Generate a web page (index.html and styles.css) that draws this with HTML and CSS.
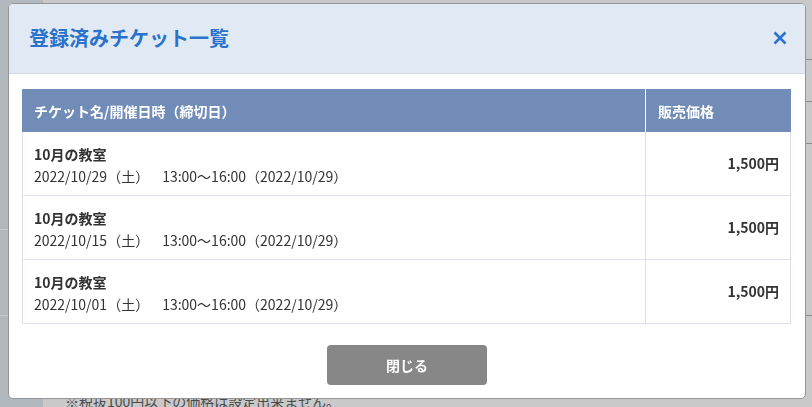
FILE: index.html
```html
<!DOCTYPE html>
<html lang="ja">
<head>
<meta charset="utf-8">
<title>登録済みチケット一覧</title>
<link rel="stylesheet" href="styles.css">
</head>
<body>
<div class="page">
  <aside class="side">
    <div class="side-row side-row--a"></div>
    <div class="side-row side-row--b"></div>
  </aside>
  <main class="main">
    <div class="main-row main-row--top"></div>
    <div class="main-row main-row--mid"></div>
    <div class="main-row main-row--mid"></div>
    <div class="main-row main-row--space"></div>
    <p class="note">※税抜100円以下の価格は設定出来ません。</p>
  </main>
</div>

<div class="modal">
  <header class="modal-header">
    <h2 class="modal-title">登録済みチケット一覧</h2>
    <button class="modal-close" aria-label="閉じる">
      <svg width="14" height="14" viewBox="0 0 14 14"><path d="M1.5 1.5 L12.5 12.5 M12.5 1.5 L1.5 12.5" stroke="currentColor" stroke-width="2.6" stroke-linecap="butt" fill="none"/></svg>
    </button>
  </header>
  <div class="modal-body">
    <table class="tickets">
      <thead>
        <tr>
          <th class="col-name">チケット名/開催日時（締切日）</th>
          <th class="col-price">販売価格</th>
        </tr>
      </thead>
      <tbody>
        <tr>
          <td class="cell-name"><div class="t-name">10月の教室</div><div class="t-date">2022/10/29（土）<span class="t-time">13:00〜16:00（2022/10/29）</span></div></td>
          <td class="cell-price">1,500円</td>
        </tr>
        <tr>
          <td class="cell-name"><div class="t-name">10月の教室</div><div class="t-date">2022/10/15（土）<span class="t-time">13:00〜16:00（2022/10/29）</span></div></td>
          <td class="cell-price">1,500円</td>
        </tr>
        <tr>
          <td class="cell-name"><div class="t-name">10月の教室</div><div class="t-date">2022/10/01（土）<span class="t-time">13:00〜16:00（2022/10/29）</span></div></td>
          <td class="cell-price">1,500円</td>
        </tr>
      </tbody>
    </table>
  </div>
  <footer class="modal-footer">
    <button class="btn-close">閉じる</button>
  </footer>
</div>
</body>
</html>
```

FILE: styles.css
```css
* { box-sizing: border-box; }
html, body {
  margin: 0;
  padding: 0;
  width: 812px;
  height: 407px;
  overflow: hidden;
  font-family: "Noto Sans CJK JP", "Noto Sans", sans-serif;
  color: #333;
}

.page {
  display: flex;
  width: 812px;
  height: 407px;
}
.side {
  width: 43px;
  flex: none;
  background: #b1b8be;
}
.side-row { border-bottom: 1px solid #c5cacf; }
.side-row--a { height: 230px; }
.side-row--b { height: 86px; }

.main {
  flex: 1;
  background: #c9c9c9;
}
.main-row { border-bottom: 1px solid #8d8d8d; }
.main-row--top { height: 60px; }
.main-row--mid { height: 42px; }
.main-row--space { height: 172px; }
.note {
  margin: 75px 0 0 22px;
  font-size: 14px;
  line-height: 20px;
  color: #4a4a4a;
}

/* modal */
.modal {
  position: fixed;
  left: 8px;
  top: 3px;
  width: 798px;
  height: 396px;
  background: #fff;
  border: 1px solid #959595;
  border-radius: 5px;
  overflow: hidden;
  display: flex;
  flex-direction: column;
}
.modal-header {
  height: 70px;
  flex: none;
  background: #e1eaf4;
  border-bottom: 1px solid #d3dbe4;
  display: flex;
  align-items: center;
  justify-content: space-between;
  padding: 0 18px 0 20px;
}
.modal-title {
  margin: 0;
  font-size: 20px;
  line-height: 28px;
  font-weight: 700;
  color: #2a72cc;
  padding-bottom: 1px;
}
.modal-close {
  border: 0;
  background: none;
  padding: 0;
  width: 14px;
  height: 14px;
  color: #2a72cc;
  display: flex;
  margin-bottom: 1px;
}

.modal-body {
  padding: 15px 14px 0 13px;
}
.tickets {
  width: 100%;
  border-collapse: separate;
  border-spacing: 0;
  font-size: 14px;
  line-height: 22px;
}
.tickets th {
  background: #728cb8;
  color: #fff;
  font-weight: 700;
  text-align: left;
  padding: 11px 12px 10px;
}
.tickets th.col-name { border-right: 1px solid #fff; }
.tickets th.col-price { width: 145px; }
.tickets td {
  padding: 11px 12px 8px 11px;
  border-bottom: 1px solid #dde0e6;
  vertical-align: middle;
}
.tickets td.cell-name {
  border-left: 1px solid #dde0e6;
  border-right: 1px solid #dde0e6;
}
.tickets td.cell-price {
  border-right: 1px solid #dde0e6;
  text-align: right;
  font-weight: 700;
  padding-right: 11px;
  padding-top: 9px;
  padding-bottom: 10px;
}
.t-name { font-weight: 700; }
.t-time { margin-left: 13px; }

.modal-footer {
  padding-top: 21px;
  display: flex;
  justify-content: center;
}
.btn-close {
  width: 160px;
  height: 40px;
  border: 0;
  border-radius: 4px;
  background: #878787;
  color: #fff;
  font-family: "Noto Sans CJK JP", sans-serif;
  font-size: 14px;
  font-weight: 700;
  padding: 0;
}
```
